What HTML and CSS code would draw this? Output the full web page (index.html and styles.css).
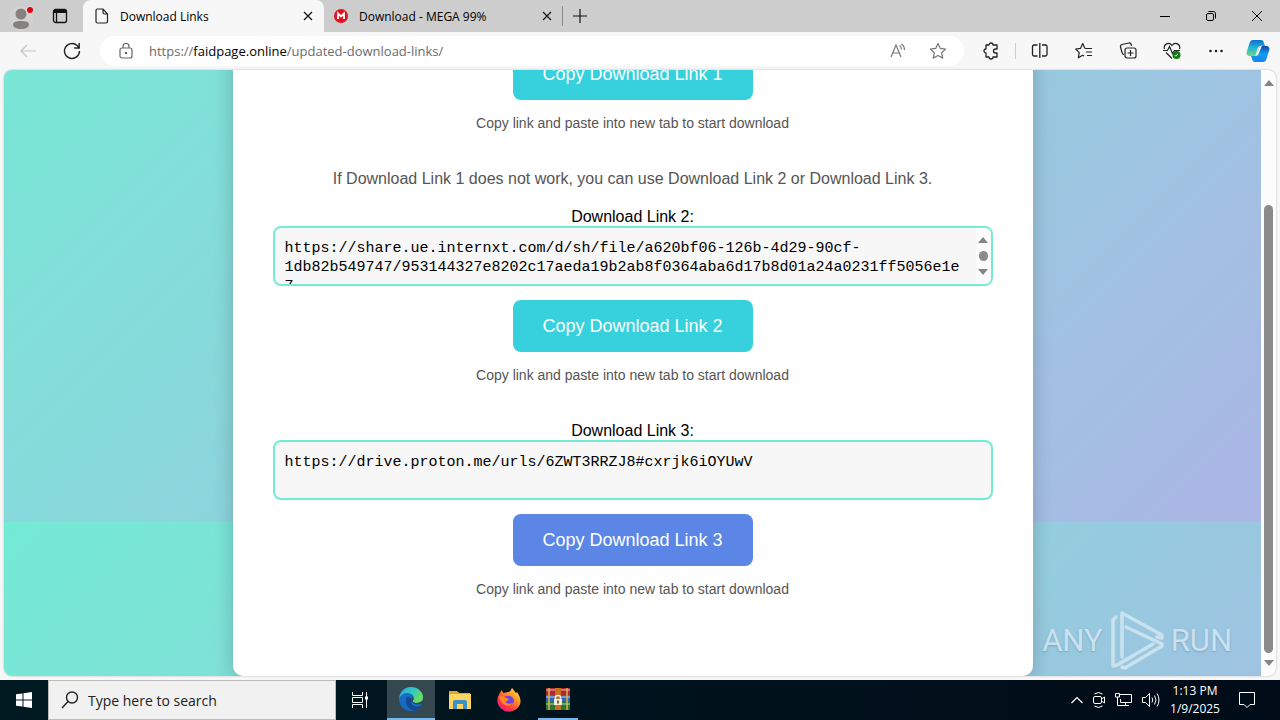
FILE: index.html
```html
<!DOCTYPE html>
<html lang="en">
<head>
    <meta charset="utf-8">
    <title>Download Links</title>
    <link rel="stylesheet" href="styles.css">
</head>
<body>
    <!-- Tab strip -->
    <header class="tab-bar">
        <button class="profile-button" aria-label="Profile">
            <svg width="26" height="28" viewBox="0 0 26 28"><circle cx="12" cy="16" r="12" fill="#d4d2d0"/><circle cx="12" cy="12" r="5.500" fill="#85817e"/><path d="M4 22.500c0-2.500 3-3.500 8-3.500s8 1 8 3.500-3 4.500-8 4.500-8-2-8-4.500z" fill="#85817e"/><circle cx="21" cy="8" r="4" fill="#ddd"/><circle cx="21" cy="8" r="3" fill="#e3000f"/></svg>
        </button>
        <button class="workspace-button" aria-label="Tab actions">
            <svg width="16" height="16" viewBox="0 0 16 16" fill="none" stroke="#111" stroke-width="1.300"><rect x="1.500" y="1.500" width="13" height="13" rx="2"/><path d="M2 3.500h12" stroke-width="3"/><path d="M4.500 5v9"/></svg>
        </button>
        <div class="tab active">
            <svg width="14" height="16" viewBox="0 0 14 16" fill="none" stroke="#222" stroke-width="1.200"><path d="M1 2.500Q1 1 2.500 1H8l4.500 5v7.500q0 1.500-1.500 1.500H2.500Q1 15 1 13.500zM8 1v3.500Q8 6 9.500 6h3"/></svg>
            <span class="tab-title">Download Links</span>
            <button class="close" aria-label="Close tab"><svg width="10" height="10" viewBox="0 0 10 10"><path d="M1 1l8 8M9 1l-8 8" stroke="#111" stroke-width="1.200"/></svg></button>
        </div>
        <div class="tab">
            <svg width="14" height="14" viewBox="0 0 14 14"><circle cx="7" cy="7" r="7" fill="#e3101f"/><path d="M4 10V4.500l3 3 3-3V10" fill="none" stroke="#fff" stroke-width="1.800"/></svg>
            <span class="tab-title">Download - MEGA 99%</span>
            <button class="close" aria-label="Close tab"><svg width="10" height="10" viewBox="0 0 10 10"><path d="M1 1l8 8M9 1l-8 8" stroke="#111" stroke-width="1.200"/></svg></button>
        </div>
        <button class="new-tab" aria-label="New tab"><svg width="14" height="14" viewBox="0 0 14 14"><path d="M7 0v14M0 7h14" stroke="#111" stroke-width="1.200"/></svg></button>
        <div class="window-buttons">
            <button aria-label="Minimize"><svg width="10" height="10" viewBox="0 0 10 10"><path d="M0 5.500h10" stroke="#000"/></svg></button>
            <button aria-label="Restore"><svg width="10" height="10" viewBox="0 0 10 10" fill="none" stroke="#000"><rect x=".5" y="2.500" width="7" height="7" rx="1.500"/><path d="M2.500.5h5q2 0 2 2v5"/></svg></button>
            <button aria-label="Close"><svg width="10" height="10" viewBox="0 0 10 10"><path d="M0 0l10 10M10 0L0 10" stroke="#000"/></svg></button>
        </div>
    </header>

    <!-- Toolbar -->
    <nav class="toolbar">
        <button aria-label="Back"><svg width="16" height="14" viewBox="0 0 16 14" fill="none" stroke="#c4c4c4" stroke-width="1.200"><path d="M16 7H1M7 1L1 7l6 6"/></svg></button>
        <button aria-label="Refresh"><svg width="18" height="18" viewBox="0 0 18 18" fill="none" stroke="#222" stroke-width="1.400"><path d="M16.500 9a7.500 7.500 0 1 1-2.400-5.500L16 5.500M16.200 1v5h-5"/></svg></button>
        <div class="address-bar">
            <svg width="14" height="16" viewBox="0 0 14 16" fill="none" stroke="#666" stroke-width="1.200"><rect x="1" y="5" width="12" height="10" rx="2"/><path d="M4 5V3.500a3 3 0 0 1 6 0V5"/><circle cx="7" cy="10" r=".7" fill="#666"/></svg>
            <span class="url">https://<b>faidpage.online</b>/updated-download-links/</span>
            <button aria-label="Read aloud"><svg width="18" height="16" viewBox="0 0 18 16" fill="none" stroke="#777" stroke-width="1.200"><path d="M2 14L7 2l5 12M3.500 10h7M10.500 2.500q2 1.500 2 4M12.500 1q3 2 3 6"/></svg></button>
            <button aria-label="Add to favorites"><svg width="18" height="18" viewBox="0 0 18 18" fill="none" stroke="#777" stroke-width="1.200" stroke-linejoin="round"><path d="M9 1.500l2.300 4.900 5.300.7-3.900 3.700 1 5.300L9 13.500l-4.700 2.600 1-5.300L1.400 7.100l5.300-.7z"/></svg></button>
        </div>
        <div class="tools">
            <button aria-label="Extensions"><svg width="18" height="18" viewBox="0 0 18 18" fill="none" stroke="#222" stroke-width="1.300" stroke-linejoin="round"><path d="M4 3h3a2 2 0 0 1 4 0h4v4h-1.500a2 2 0 0 0 0 4H15v4h-4a2 2 0 0 1-4 0H4v-4a2 2 0 0 1 0-4z"/></svg></button>
            <i class="separator"></i>
            <button aria-label="Split screen"><svg width="18" height="18" viewBox="0 0 18 18" fill="none" stroke="#222" stroke-width="1.300"><path d="M6.500 3H3Q1.500 3 1.500 4.500v8Q1.500 14 3 14h3.500M11 3h3.500Q16 3 16 4.500v8q0 1.500-1.500 1.500H11M8.800 1v15"/></svg></button>
            <button aria-label="Favorites"><svg width="18" height="18" viewBox="0 0 18 18" fill="none" stroke="#222" stroke-width="1.200" stroke-linejoin="round"><path d="M10 6.500H17M11 10h6M12 13.500h5M10 6.500L7.700 1.500 5.500 6.400l-4.800.6 3.500 3.600-.8 5.200 4.300-2.500 1.300.8"/></svg></button>
            <button aria-label="Collections"><svg width="18" height="18" viewBox="0 0 18 18" fill="none" stroke="#222" stroke-width="1.200"><rect x="6" y="6" width="11" height="10" rx="2"/><path d="M11.500 8v6M8.500 11h6M5 12.500q-1.500 0-2-2L1.500 5Q1 3 3 2.500L10 1q1.500-.3 2 1l.5 2"/></svg></button>
            <button aria-label="Browser essentials"><svg width="18" height="18" viewBox="0 0 18 18" fill="none" stroke="#222" stroke-width="1.200"><path d="M1.500 7C0 2 6-.5 9 3.500 12-.5 18 2 16.500 7M3 10.500l6 6M0 8.500h4.500l2-4 3 7 2-3H17"/><circle cx="13.500" cy="13" r="4" fill="#107c10" stroke="none"/><path d="M11.800 13.200l1 1 2.200-2.400" stroke="#fff" stroke-width="1"/></svg></button>
            <button aria-label="Settings and more"><svg width="18" height="18" viewBox="0 0 18 18" fill="#222"><circle cx="3.500" cy="9" r="1.300"/><circle cx="9" cy="9" r="1.300"/><circle cx="14.500" cy="9" r="1.300"/></svg></button>
            <button class="copilot" aria-label="Copilot"><svg width="26" height="24" viewBox="0 0 26 24">
                <defs><linearGradient id="cp1" x1="0" y1="0" x2="0" y2="1"><stop offset="0" stop-color="#0d6fd0"/><stop offset=".5" stop-color="#24b8d8"/><stop offset="1" stop-color="#74d676"/></linearGradient><linearGradient id="cp2" x1="0" y1="0" x2="0" y2="1"><stop offset="0" stop-color="#1647a5"/><stop offset=".5" stop-color="#159cf3"/><stop offset="1" stop-color="#1685e8"/></linearGradient></defs>
                <path d="M8 1h8c2 0 2.500 1.500 3 3l1 3h-4c-2 0-3 1-3.500 3L11 15c-.5 1.500-1.500 2-3 2H5c-3 0-4-2-3-5L4.500 4C5.200 2 6 1 8 1z" fill="url(#cp1)"/>
                <path d="M18 23h-8c-2 0-2.500-1.500-3-3l-1-3h3c2 0 3-1 3.500-3L14 9c.5-1.500 1.500-2 3-2h4c3 0 4 2 3 5l-2.500 8c-.8 2-1.500 3-3.500 3z" fill="url(#cp2)"/>
                <path d="M14.500 8q1-1.500 2.500-1.500L14 14q-1 3-3.500 3 1-1 1.500-2.500z" fill="#f7f7f7"/>
            </svg></button>
        </div>
    </nav>

    <div class="browser-content">
        <main class="page">
            <div class="container">
                <section>
                    <button class="copy-button">Copy Download Link 1</button>
                    <p class="note">Copy link and paste into new tab to start download</p>
                </section>
                <p class="info">If Download Link 1 does not work, you can use Download Link 2 or Download Link 3.</p>
                <section>
                    <label for="link2">Download Link 2:</label>
                    <div class="link-box">
                        <textarea id="link2" readonly>https://share.ue.internxt.com/d/sh/file/a620bf06-126b-4d29-90cf-1db82b549747/953144327e8202c17aeda19b2ab8f0364aba6d17b8d01a24a0231ff5056e1e7</textarea>
                        <div class="mini-scroll"><i class="arrow-up"></i><i class="dot"></i><i class="arrow-down"></i></div>
                    </div>
                    <button class="copy-button">Copy Download Link 2</button>
                    <p class="note">Copy link and paste into new tab to start download</p>
                </section>
                <section>
                    <label for="link3">Download Link 3:</label>
                    <div class="link-box">
                        <textarea id="link3" readonly>https://drive.proton.me/urls/6ZWT3RRZJ8#cxrjk6iOYUwV</textarea>
                    </div>
                    <button class="copy-button hover">Copy Download Link 3</button>
                    <p class="note">Copy link and paste into new tab to start download</p>
                </section>
            </div>
            <div class="watermark">
                <span>ANY</span>
                <svg width="56" height="64" viewBox="0 0 56 64" fill="none" stroke="#e4f0f8" stroke-width="3.500" stroke-linejoin="round" stroke-linecap="round"><path d="M7 9L4 12V58l4-1 36-21M13 49V5l40 22v3l-5-1M17 19l36 17v2L16 60l-3-1"/></svg>
                <span>RUN</span>
            </div>
        </main>
        <div class="scrollbar"><i class="arrow-up"></i><div class="track"><div class="thumb"></div></div><i class="arrow-down"></i></div>
    </div>

    <!-- Taskbar -->
    <footer class="taskbar">
        <button class="start" aria-label="Start"><svg width="16" height="16" viewBox="0 0 16 16" fill="#fff"><path d="M0 2.300l6.500-.9v6.100H0zM7.500 1.200L16 0v7.500H7.500zM0 8.500h6.500v6.100L0 13.700zM7.500 8.500H16V16l-8.500-1.200z"/></svg></button>
        <div class="search">
            <svg width="18" height="18" viewBox="0 0 18 18" fill="none" stroke="#222" stroke-width="1.400"><circle cx="11" cy="6.500" r="5.500"/><path d="M7 10.500L1 17"/></svg>
            <input type="text" placeholder="Type here to search" aria-label="Search">
        </div>
        <button class="app" aria-label="Task view"><svg width="18" height="18" viewBox="0 0 18 18" fill="none" stroke="#fff"><path d="M1.500 1v3.500h10V1M1.500 17v-3.500h10V17M1.500 6.500h10v5h-10zM15.500 1v16"/><path d="M14 5.500h3v3h-3z" fill="#fff" stroke="none"/></svg></button>
        <div class="apps">
            <button class="app current" aria-label="Edge"><svg width="24" height="24" viewBox="0 0 24 24">
                <defs><linearGradient id="eg1" x1="0" y1="0" x2="1" y2=".5"><stop offset="0" stop-color="#2ba4e0"/><stop offset=".6" stop-color="#35c9bd"/><stop offset="1" stop-color="#69e05a"/></linearGradient></defs>
                <circle cx="12" cy="12" r="12" fill="#176bc0"/><path d="M0 12C1 4 6 0 12 0c7 0 12 5 12 10 0 4-3 6-6 6-3 0-5-1-4-2.500C17 9 12 6 8 6c-4 0-7 3-8 6z" fill="url(#eg1)"/><path d="M8 10c-3 5 0 12 7 13.500 3-.5 6-2.500 7.500-5-7 3-12-1-10-6-1-2-3-3-4.500-2.500z" fill="#124a91"/><path d="M13 10c-2 5 2 8.500 9 7l2 1v-4l-6 2c-3 0-5-1-4-2.500.7-1.500.5-3-1-3.500z" fill="#35474f"/>
            </svg></button>
            <button class="app" aria-label="File Explorer"><svg width="22" height="20" viewBox="0 0 22 20"><path d="M0 1h8l2 2h11v3H0z" fill="#e5a526"/><path d="M0 4h22v15H0z" fill="#fcd462"/><path d="M4 19v-7q0-2 2-2h10q2 0 2 2v7h-4v-5H8v5z" fill="#3d91c9"/></svg></button>
            <button class="app" aria-label="Firefox"><svg width="24" height="24" viewBox="0 0 24 24">
                <defs><linearGradient id="ff1" x1="1" y1="0" x2=".2" y2="1"><stop offset="0" stop-color="#fff04a"/><stop offset=".4" stop-color="#ff9526"/><stop offset=".75" stop-color="#ff3647"/><stop offset="1" stop-color="#e31587"/></linearGradient></defs>
                <path d="M3 5l1.500-3 2 3L9 4.500l4-1L15 0c2 2 3 4 4 5l1-1c4 6 5 11 1 15.500-4 5-13 6-18 0C-1 15 0 9 3 5z" fill="url(#ff1)"/><path d="M7 10c3-4 9-2 10 2 0 4-3 6-6 5-3 0-5-3-4-7z" fill="#7543d4"/><path d="M2 9q4-2 7 1l3 1q-1 2-4 3 3 3 8 1-3 4-8 2-4-2-6-8z" fill="#ff8a24"/>
            </svg></button>
            <button class="app open" aria-label="WinRAR"><svg width="24" height="22" viewBox="0 0 24 22"><path d="M0 0h24v7H0z" fill="#b2262c"/><path d="M0 7h24v7H0z" fill="#2f65bb"/><path d="M0 14h24v8H0z" fill="#297532"/><path d="M0 2h24M0 9h24M0 16h24" stroke="#fff" stroke-opacity=".35" stroke-width="2"/><path d="M3 0v22M21 0v22" stroke="#dab64d" stroke-width="1.500"/><path d="M9 0h6v22H9z" fill="#c6721c"/><path d="M9.500 12V9.500q0-2 2.500-2t2.500 2V12" fill="none" stroke="#eee" stroke-width="1.500"/><path d="M8 11h8v6H8z" fill="#f5edda"/><path d="M12 12.500v3" stroke="#333" stroke-width="1.500"/></svg></button>
        </div>
        <div class="tray">
            <button aria-label="Hidden icons"><svg width="12" height="8" viewBox="0 0 12 8" fill="none" stroke="#fff" stroke-width="1.200"><path d="M.5 7L6 1.500 11.500 7"/></svg></button>
            <button aria-label="Meet now"><svg width="12" height="18" viewBox="0 0 12 18" fill="none" stroke="#fff"><rect x=".5" y="5.500" width="8" height="7" rx="1.500"/><path d="M8.500 8l3-2v6l-3-2M1.500 3q4-3 8 0M1.500 15q4 3 8 0"/></svg></button>
            <button aria-label="Network"><svg width="17" height="16" viewBox="0 0 17 16" fill="none" stroke="#fff"><path d="M5 2.500h11.500v8h-11V7M10.500 10.500v3M7 13.500h7M.5 1.500h4V5h-4zM2.500 5v8.500H7"/></svg></button>
            <button aria-label="Volume"><svg width="18" height="16" viewBox="0 0 18 16" fill="none" stroke="#fff"><path d="M.5 5.500h3l4-4v13l-4-4h-3zM10 5.500q1.500 2.500 0 5M12.500 3.500q3 4.500 0 9M15 1.500q4 6.500 0 13"/></svg></button>
            <div class="clock"><span>1:13 PM</span><span>1/9/2025</span></div>
            <button aria-label="Notifications"><svg width="16" height="16" viewBox="0 0 16 16" fill="none" stroke="#fff"><path d="M.5.5h15v12H11l-3 3-3-3H.5z"/></svg></button>
        </div>
    </footer>
</body>
</html>
```
FILE: styles.css
```css
* {
    box-sizing: border-box;
}
body {
    display: flex;
    flex-direction: column;
    height: 100vh;
    margin: 0;
    overflow: hidden;
    background-color: #f7f7f7;
    color: #000;
    font-family: "Open Sans", "Noto Sans", sans-serif;
}
button {
    display: flex;
    align-items: center;
    justify-content: center;
    padding: 0;
    border: none;
    background: none;
    font-family: inherit;
    cursor: pointer;
}
svg {
    display: block;
    flex: none;
}

/* Tabs */
.tab-bar {
    display: flex;
    flex: none;
    height: 32px;
    background-color: #cdcdcd;
    font-size: 12px;
}
.profile-button {
    width: 44px;
}
.workspace-button {
    width: 32px;
}
.tab {
    display: flex;
    align-items: center;
    gap: 11px;
    width: 238px;
    padding: 0 10px;
}
.tab.active {
    width: 241px;
    margin-left: 7px;
    padding: 0 11px 0 12px;
    border-radius: 8px 8px 0 0;
    background-color: #f7f7f7;
}
.tab-title {
    flex: 1;
    white-space: nowrap;
}
.new-tab {
    width: 35px;
    height: 20px;
    margin-top: 6px;
    border-left: 1px solid #888;
}
.window-buttons {
    display: flex;
    margin-left: auto;
}
.window-buttons button {
    width: 46px;
}

/* Toolbar */
.toolbar {
    display: flex;
    flex: none;
    align-items: center;
    height: 38px;
    padding: 0 9px 0 6px;
}
.toolbar > button {
    width: 44px;
    height: 30px;
}
.address-bar {
    display: flex;
    flex: 1;
    align-items: center;
    height: 30px;
    margin-left: 6px;
    padding: 0 6px 0 19px;
    border-radius: 15px;
    background-color: #fff;
    font-size: 13px;
}
.address-bar button {
    width: 40px;
    height: 30px;
}
.url {
    flex: 1;
    margin-left: 16px;
    color: #6b6b6b;
}
.url b {
    color: #000;
    font-weight: 400;
}
.tools {
    display: flex;
    align-items: center;
    gap: 26px;
    margin-left: 18px;
}
.separator {
    width: 1px;
    height: 16px;
    margin: 0 -11px;
    background-color: #ccc;
}
.copilot {
    margin-left: -6px;
}

/* Web page */
.browser-content {
    display: flex;
    flex: 1;
    min-height: 0;
    margin: 0 4px 4px;
    overflow: hidden;
    border-radius: 8px;
    background-color: #fcfcfc;
    box-shadow: 0 0 2px rgba(0, 0, 0, 0.3);
}
.page {
    position: relative;
    display: flex;
    flex: 1;
    align-items: flex-end;
    justify-content: center;
    overflow: hidden;
    font-family: "Liberation Sans", Arial, sans-serif;
}
/* The gradient is one screen high and repeats below the fold */
.page::before {
    content: "";
    position: absolute;
    top: -154px;
    bottom: 0;
    left: 0;
    right: 0;
    background-image: linear-gradient(135deg, #74ebd5, #acb6e5);
    background-size: 100% calc(100vh - 114px);
}
.container {
    position: relative;
    width: 800px;
    padding: 40px;
    border-radius: 10px;
    background-color: #fff;
    box-shadow: 0 4px 20px rgba(0, 0, 0, 0.2);
    text-align: center;
}
label {
    display: block;
    font-size: 16px;
    line-height: 18px;
}
.link-box {
    position: relative;
    margin-bottom: 14px;
}
textarea {
    display: block;
    width: 100%;
    height: 60px;
    padding: 11px 25px 10px 10px;
    overflow: hidden;
    border: 2px solid #74ebd5;
    border-radius: 8px;
    outline: none;
    background-color: #f7f7f7;
    color: #000;
    font-family: "Liberation Mono", monospace;
    font-size: 15px;
    line-height: 19px;
    resize: none;
}
.copy-button {
    display: inline-block;
    width: 240px;
    height: 52px;
    border-radius: 8px;
    background-color: #36d1dc;
    color: #fff;
    font-size: 18px;
    vertical-align: top;
}
.copy-button.hover {
    background-color: #5b86e5;
}
.note {
    margin: 14px 0 38px;
    color: #555;
    font-size: 14px;
    line-height: 18px;
}
.info {
    margin: 0 0 20px;
    color: #555;
    font-size: 16px;
    line-height: 18px;
}

/* Scrollbars */
.scrollbar {
    display: flex;
    flex-direction: column;
    align-items: center;
    width: 15px;
    padding: 10px 0;
}
.track {
    display: flex;
    flex: 1;
    align-items: flex-end;
    padding: 7px 0;
}
.thumb {
    width: 9px;
    height: 80%;
    border-radius: 5px;
    background-color: #8b8b8b;
}
.arrow-up, .arrow-down {
    border: 5px solid transparent;
    border-top: none;
    border-bottom: 6px solid #858585;
}
.arrow-down {
    transform: rotate(180deg);
}
.mini-scroll {
    position: absolute;
    top: 2px;
    right: 2px;
    bottom: 2px;
    display: flex;
    flex-direction: column;
    align-items: center;
    justify-content: space-between;
    width: 15px;
    padding: 9px 0;
    border-radius: 0 6px 6px 0;
    background-color: #fcfcfc;
}
.dot {
    width: 9px;
    height: 10px;
    border-radius: 5px;
    background-color: #8b8b8b;
}
.watermark {
    position: absolute;
    right: 29px;
    bottom: 4px;
    display: flex;
    align-items: center;
    gap: 6px;
    color: #e4f0f8;
    font-family: "Roboto", sans-serif;
    font-size: 31px;
    opacity: 0.65;
    text-shadow: 0 1px 2px rgba(60, 90, 120, 0.5);
}

/* Taskbar */
.taskbar {
    display: flex;
    flex: none;
    height: 40px;
    background: linear-gradient(90deg, #001a22, #000b18);
    color: #fff;
}
.start, .app {
    width: 48px;
}
.search {
    display: flex;
    align-items: center;
    gap: 9px;
    width: 288px;
    padding: 0 12px;
    border: 1px solid #bbb;
    background-color: #f1f1f1;
}
.search input {
    flex: 1;
    min-width: 0;
    padding: 0;
    border: none;
    outline: none;
    background: none;
    font-family: inherit;
    font-size: 14px;
}
.search input::placeholder {
    color: #222;
}
.apps {
    display: flex;
    gap: 1px;
    margin-left: 3px;
}
.app.current, .app.open {
    border-bottom: 2px solid #76b9ed;
}
.app.current {
    background-color: #35474f;
}
.app.open {
    width: 40px;
    margin-left: 4px;
}
.tray {
    display: flex;
    align-items: center;
    gap: 10px;
    margin-left: auto;
    padding-right: 25px;
}
.clock {
    display: flex;
    flex-direction: column;
    align-items: center;
    width: 52px;
    margin: 0 8px 0 -1px;
    font-size: 12px;
    line-height: 18px;
}
```
